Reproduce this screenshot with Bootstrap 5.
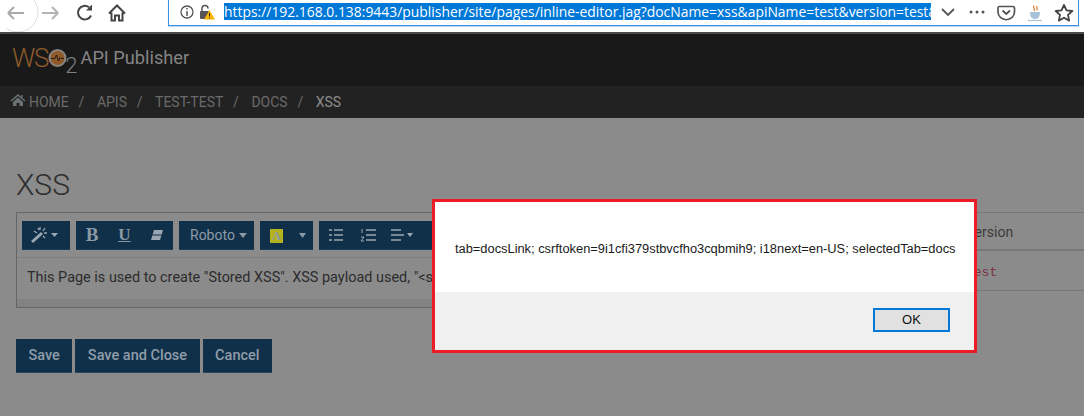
<!DOCTYPE html>
<html lang="en">
<head>
<meta charset="utf-8">
<title>API Publisher</title>
<link href="https://cdn.jsdelivr.net/npm/bootstrap@5.3.0/dist/css/bootstrap.min.css" rel="stylesheet">
<style>
html,body{height:416px;overflow:hidden}
body{background:#8b8b8b;font-family:Roboto,"Liberation Sans",sans-serif;color:#2c2c2c;font-size:14px;position:relative}
.chrome-bar{height:34px;background:#fff;border-bottom:2px solid #4a4a4a;padding-left:6px;overflow:hidden}
.nav-btns{width:162px;height:32px}
.url-box{width:911px;height:28px;margin-top:-2px;border:1px solid #3d8fdc;border-top:0;box-shadow:0 1px 1px #bcd8f2;padding-left:10px;font-family:"Open Sans","Noto Sans",sans-serif;font-size:13.9px}
.url-sel{width:707px;background:#0078d7;color:#fff;overflow:hidden;white-space:nowrap;height:17px;line-height:17px}
.url-tools{margin-left:8px}
.brand-bar{height:52px;background:#191919;padding:0 0 4px 12px}
.logo-ws{font-weight:300;font-size:26px;color:#8d5a2c;letter-spacing:-1.2px;line-height:1}
.logo-two{font-size:22px;color:#7f7f7f;font-weight:300;align-self:flex-end;line-height:1;margin-left:-2px;margin-bottom:5px}
.logo-name{color:#858585;font-size:18.2px;margin-left:3px;font-weight:400;margin-bottom:1px}
.crumb-bar{height:32px;background:#222;padding-left:10px;color:#6a6a6a;font-size:14px;white-space:nowrap}
.crumb-bar .sep{margin:0 12.5px 0 9.800px}
.crumb-home{margin-right:3px}
.crumb-now{color:#8e8e8e}
.page-title{font-size:30px;font-weight:300;color:#2e2e2e;margin:0;line-height:1;padding-top:52px;padding-left:16px;height:94px}
.work-row{padding-left:16px}
.editor-box{width:880px;height:96px;border:1px solid #666;background:#8b8b8b;overflow:hidden;flex:none}
.tool-strip{height:45px;border-bottom:1px solid #7e7e7e;padding:8px 0 0 5px;gap:6px}
.tool-grp{height:29px;background:#10304a;color:#8c9aa6;border-bottom:1px solid #1c3c56;padding:0 8px;flex:none}
.tool-grp svg{display:block;flex:none}
.tg-style{width:97px;padding:0}
.tg-cell{width:32.300px;text-align:center}
.tg-font{width:75px;padding:0 0 0 11px}
.tg-color{width:53px;padding:0 0 0 10px}
.tg-para{width:130px;padding:0 0 0 10px}
.tg-b{font-family:"Liberation Serif",serif;font-size:19px;font-weight:700}
.tg-u{font-family:"Liberation Serif",serif;font-size:17px;font-weight:700;text-decoration:underline}
.tg-a{width:13px;height:14px;line-height:14px;background:#b3b31f;color:#8c9aa6;font-family:"Liberation Serif",serif;font-size:13px;font-weight:700;text-align:center;margin-top:1px}
.editor-text{height:41px;padding:10px 10px 0;white-space:nowrap;overflow:hidden;color:#2b2b2b;font-size:14.45px;line-height:19px}
.editor-foot{height:9px;background:#828282}
.side-table{margin-left:62px;flex:1 1 0;min-width:0}
.side-head{height:39px;border-top:1px solid #777;border-bottom:2px solid #777;padding:9px 0 0 8px;color:#3a3a3a}
.side-cell{height:40px;border-bottom:1px solid #777;padding:12px 0 0 8px;font-family:"Liberation Mono",monospace;font-size:13px;color:#7c3247}
.act-row{padding:31px 0 0 16px;gap:3px}
.act-btn{height:34px;background:#10304a;color:#8f9ca8;border:0;border-bottom:1px solid #28465c;border-radius:0;font-size:14.5px;font-weight:500;padding:0 12.5px;line-height:33px}
.alert-frame{position:absolute;left:432px;top:199px;width:545px;height:154px;border:3px solid #ee1c25;background:#fff;font-family:"Liberation Sans",sans-serif;color:#1a1a1a}
.alert-msg{height:90px;font-size:12.85px;padding:37px 0 0 20px;white-space:nowrap}
.alert-foot{height:58px;background:#f0f0f0;padding:16px 24px 0 0}
.alert-ok{width:77px;height:24px;border:2px solid #0078d7;background:#e1e1e1;font-size:13px;line-height:20px;text-align:center;color:#111;padding:0;border-radius:0}
</style>
</head>
<body>
<div class="chrome-bar d-flex">
  <div class="nav-btns d-flex align-items-center flex-shrink-0">
    <svg width="162" height="32" viewBox="0 0 162 32" fill="none">
      <circle cx="12" cy="12" r="20" stroke="#ddd" stroke-width="1"/>
      <path d="M2 13H18M2 13L8 7M2 13L8 19" stroke="#aaa" stroke-width="2"/>
      <path d="M36 13H52M52 13L46 7M52 13L46 19" stroke="#b4b4b4" stroke-width="2"/>
      <path d="M83 7.300A6.800 6.800 0 1 0 85 15.500" stroke="#444" stroke-width="2"/>
      <path d="M80 10.500H86V4.500Z" fill="#444"/>
      <path d="M103 13.500L111 5.500L119 13.500M105.500 12.500V20.500H109V15.500H113V20.500H116.500V12.500" stroke="#444" stroke-width="2"/>
    </svg>
  </div>
  <div class="url-box d-flex align-items-center flex-shrink-0">
    <svg width="45" height="20" viewBox="0 0 45 20" fill="none" class="flex-shrink-0">
      <circle cx="8" cy="10" r="6" stroke="#555" stroke-width="1.300"/>
      <path d="M8 9V14M8 6V7.500" stroke="#555" stroke-width="1.500"/>
      <path d="M23 9V6.500A3 3 0 0 1 29 6.500" stroke="#555" stroke-width="1.500"/>
      <rect x="21" y="9" width="9" height="8" rx="1" fill="#555"/>
      <path d="M30.500 8L36 17.500H25Z" fill="#f7b500"/>
      <path d="M30.500 11V14.500M30.500 15.500V16.500" stroke="#333" stroke-width="1"/>
    </svg>
    <div class="url-sel flex-shrink-0">https://192.168.0.138:9443/publisher/site/pages/inline-editor.jag?docName=xss&amp;apiName=test&amp;version=test&amp;</div>
    <svg class="url-tools flex-shrink-0" width="137" height="20" viewBox="0 0 137 20" fill="none">
      <path d="M3 7L9 13L15 7" stroke="#555" stroke-width="1.800"/>
      <circle cx="32" cy="10" r="1.500" fill="#555"/><circle cx="38" cy="10" r="1.500" fill="#555"/><circle cx="44" cy="10" r="1.500" fill="#555"/>
      <path d="M60 4.500H74A1.500 1.500 0 0 1 75.500 6V10A8 7.500 0 0 1 59 10V6A1.500 1.500 0 0 1 60 4.500Z" stroke="#555" stroke-width="1.700"/>
      <path d="M63.500 8.500L67.300 12L71 8.500" stroke="#555" stroke-width="1.800"/>
      <path d="M95 3.500C93 6 97 7 95 9M98 4C97 6 99 7 98 8.500" stroke="#e07b2c" stroke-width="1.200"/>
      <path d="M91 10H101C101 15 99 17 96 17C93 17 91 15 91 10Z" fill="#a9c2d8"/>
      <path d="M89 18.500H103" stroke="#a9c2d8" stroke-width="1.200"/>
      <path d="M125 3L127.500 8.300L133.300 9L129 12.900L130.200 18.600L125 15.700L119.800 18.600L121 12.900L116.700 9L122.500 8.300Z" stroke="#444" stroke-width="1.800" stroke-linejoin="round"/>
    </svg>
  </div>
</div>

<div class="brand-bar d-flex align-items-center">
  <span class="logo-ws">WS</span>
  <svg width="19" height="20" viewBox="0 0 19 20" fill="none" class="flex-shrink-0">
    <circle cx="9.500" cy="10" r="8" fill="#8f5a2a" stroke="#8a8580" stroke-width="2"/>
    <path d="M3 10.500H7L8.500 7L10.500 13L12 9.500L13 10.500H16" stroke="#241a12" stroke-width="1"/>
  </svg>
  <span class="logo-two">2</span>
  <span class="logo-name">API Publisher</span>
</div>

<div class="crumb-bar d-flex align-items-center">
  <svg width="16" height="14" viewBox="0 0 16 14" class="mb-1 flex-shrink-0 crumb-home" fill="#6b7072"><path d="M8 1L0.500 7.500L1.500 8.500L8 3L14.500 8.500L15.500 7.500L12.500 5V2H11V3.700ZM3 9V13H6.500V10H9.500V13H13V9L8 4.500Z"/></svg>
  <span>HOME</span><span class="sep">/</span><span>APIS</span><span class="sep">/</span><span>TEST-TEST</span><span class="sep">/</span><span>DOCS</span><span class="sep">/</span><span class="crumb-now">XSS</span>
</div>

<h1 class="page-title">XSS</h1>

<div class="work-row d-flex">
  <div class="editor-box">
    <div class="tool-strip d-flex">
      <div class="tool-grp d-flex align-items-center">
        <svg width="32" height="20" viewBox="0 0 32 20" fill="none">
          <path d="M2 17L12 8" stroke="#9aa6b0" stroke-width="3"/>
          <path d="M10 2V5M15 3L13 6M4 6L7 8M17 8H14M13 11L15 13M8 3L9 5" stroke="#9aa6b0" stroke-width="1.300"/>
          <path d="M21 8H28L24.500 12Z" fill="#9aa6b0"/>
        </svg>
      </div>
      <div class="tool-grp tg-style d-flex align-items-center">
        <span class="tg-cell tg-b">B</span>
        <span class="tg-cell tg-u">U</span>
        <span class="tg-cell d-flex justify-content-center"><svg width="14" height="12" viewBox="0 0 14 12" fill="#9aa6b0"><path d="M4 1H13L10 11H1Z"/><path d="M2.500 6H11.500" stroke="#10304a" stroke-width="1"/></svg></span>
      </div>
      <div class="tool-grp tg-font d-flex align-items-center">
        <span>Roboto</span>
        <svg class="ms-1" width="8" height="5" viewBox="0 0 8 5" fill="#8c9aa6"><path d="M0 0H8L4 5Z"/></svg>
      </div>
      <div class="tool-grp tg-color d-flex align-items-center">
        <span class="tg-a">A</span>
        <svg class="ms-3" width="7" height="5" viewBox="0 0 7 5" fill="#8c9aa6"><path d="M0 0H7L3.500 5Z"/></svg>
      </div>
      <div class="tool-grp tg-para d-flex align-items-center">
        <svg width="120" height="14" viewBox="0 0 120 14" fill="none" stroke="#9aa6b0" stroke-width="1.500">
          <path d="M0 2H3M0 7H3M0 12H3M5 2H14M5 7H14M5 12H14"/>
          <path d="M37 2H47M37 7H47M37 12H47"/>
          <path d="M33 1V5M32 9H35L32 13H35" stroke-width="1"/>
          <path d="M62 2H72M62 7H75M62 12H72"/>
          <path d="M78 5H84L81 9Z" fill="#9aa6b0" stroke="none"/>
        </svg>
      </div>
    </div>
    <div class="editor-text">This Page is used to create "Stored XSS". XSS payload used, "&lt;script&gt;alert(document.cookie)&lt;/script&gt;"</div>
    <div class="editor-foot"></div>
  </div>
  <div class="side-table">
    <div class="side-head">Version</div>
    <div class="side-cell">test</div>
  </div>
</div>

<div class="act-row d-flex">
  <button type="button" class="btn act-btn">Save</button>
  <button type="button" class="btn act-btn">Save and Close</button>
  <button type="button" class="btn act-btn">Cancel</button>
</div>

<div class="alert-frame">
  <div class="alert-msg">tab=docsLink; csrftoken=9i1cfi379stbvcfho3cqbmih9; i18next=en-US; selectedTab=docs</div>
  <div class="alert-foot d-flex justify-content-end align-items-start">
    <button type="button" class="btn alert-ok">OK</button>
  </div>
</div>
</body>
</html>
